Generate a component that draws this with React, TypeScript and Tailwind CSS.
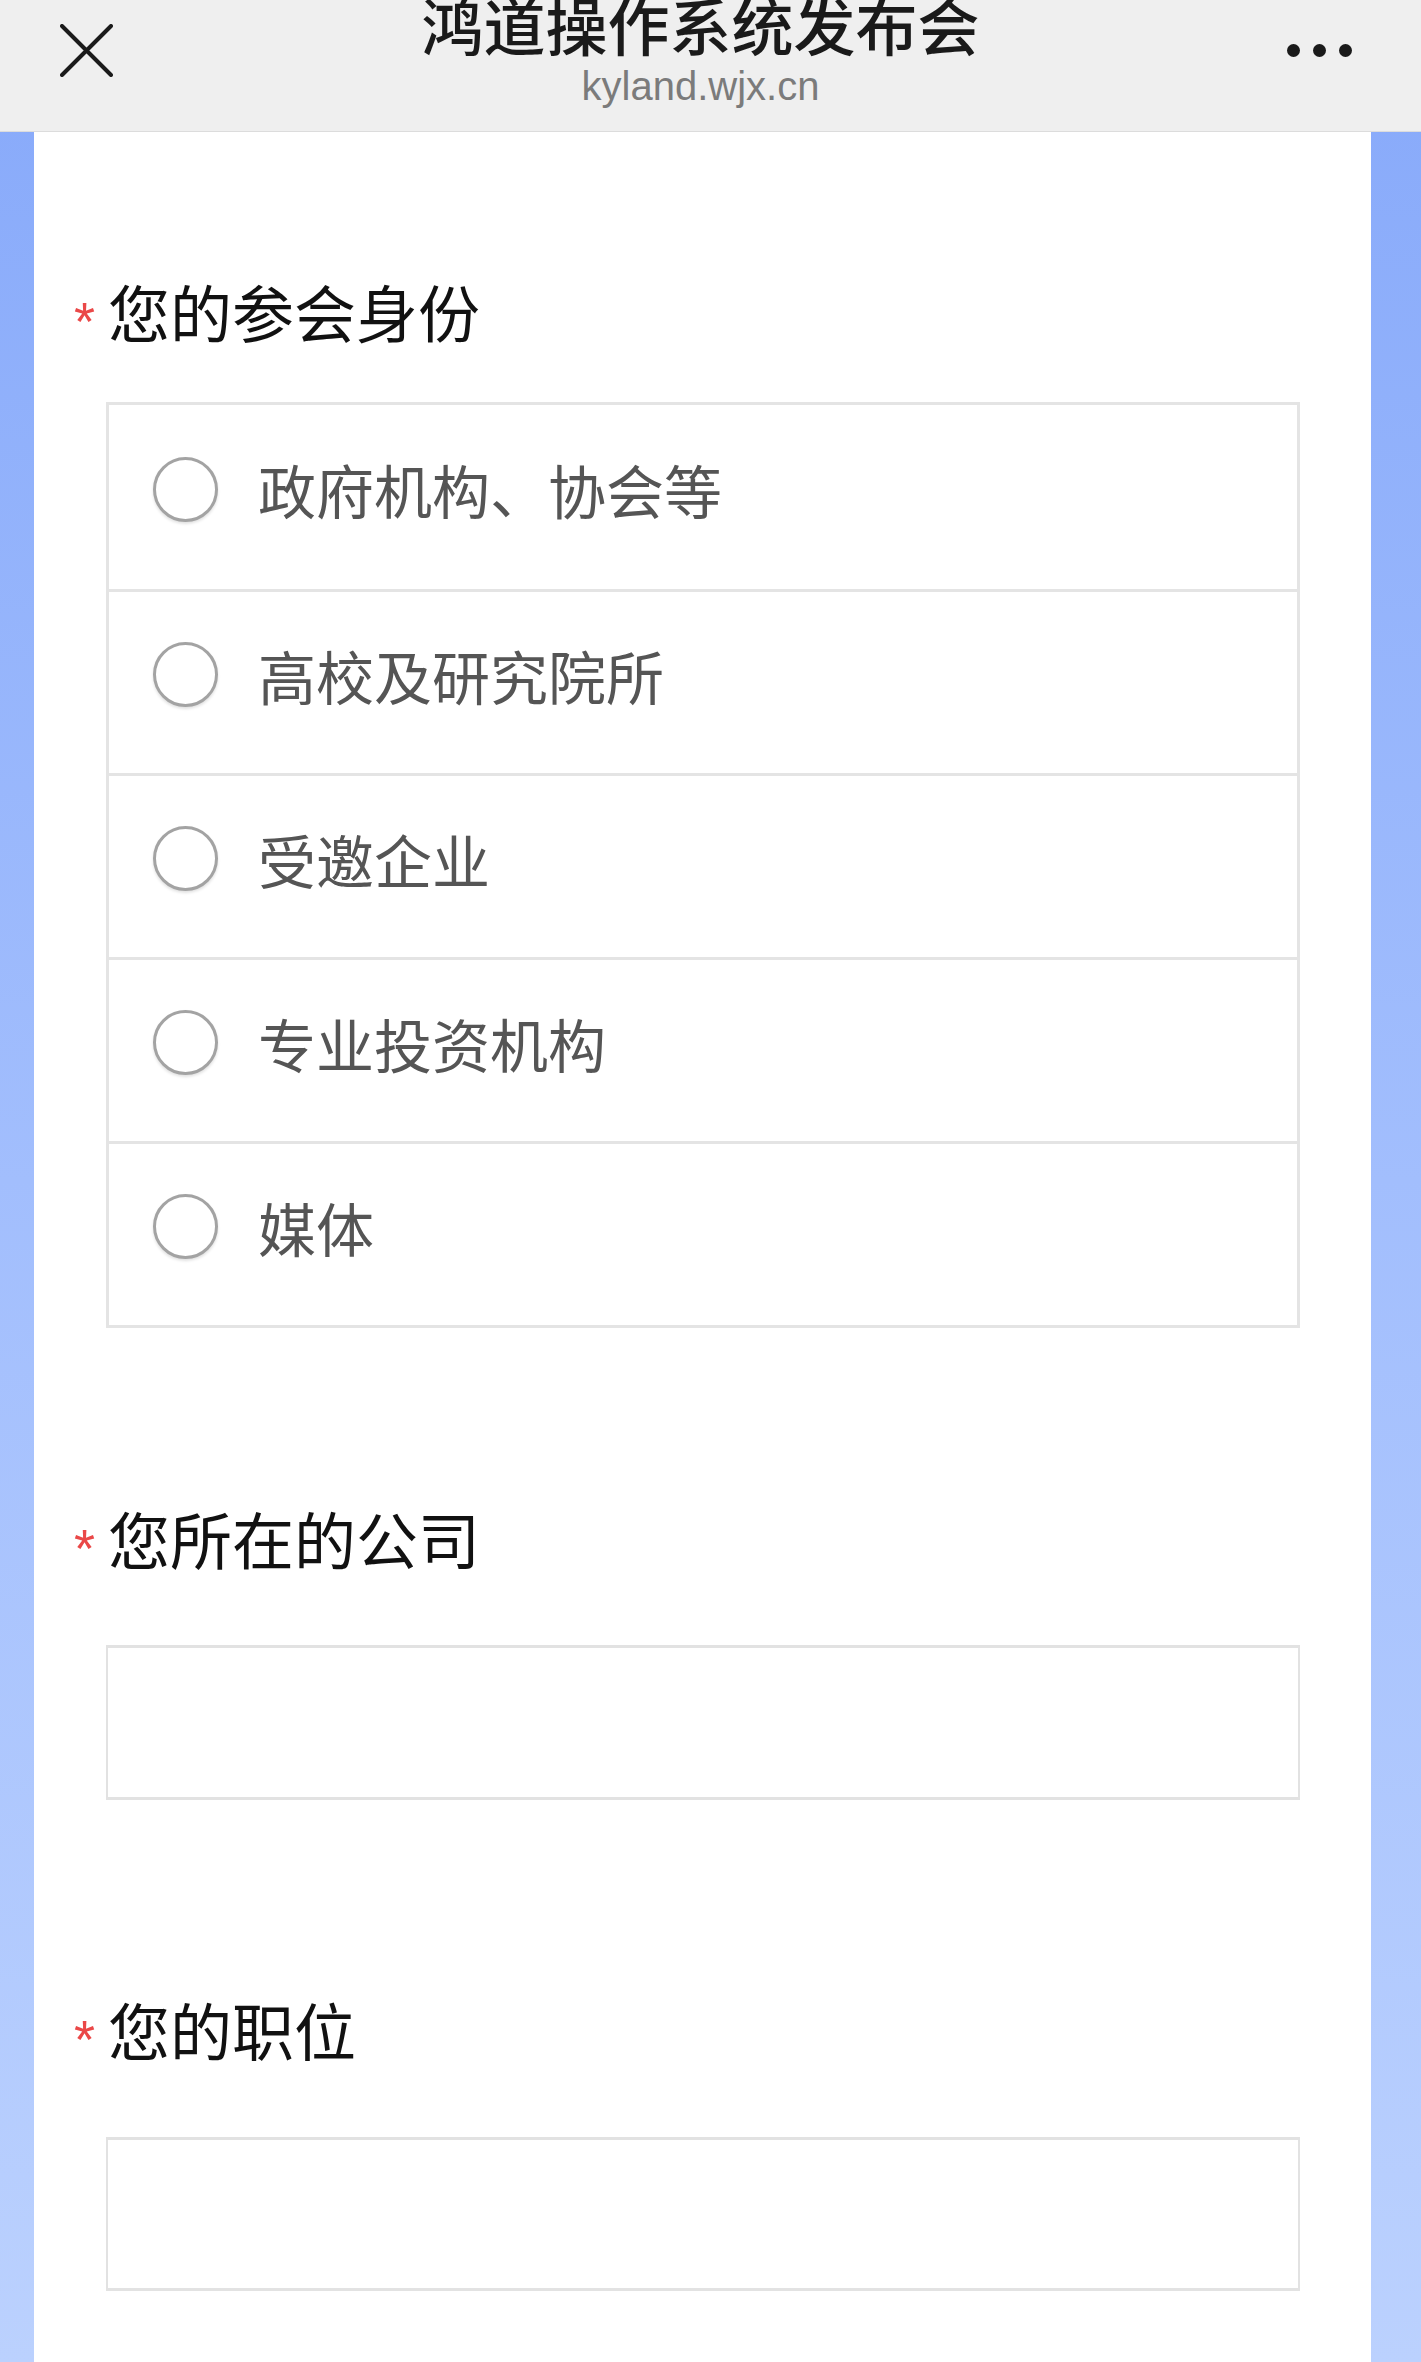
import React from "react";

const options = ["政府机构、协会等", "高校及研究院所", "受邀企业", "专业投资机构", "媒体"];

function Label({ text }: { text: string }) {
  return (
    <div className="flex items-center h-[62px] pl-[40px]">
      <span className="w-[34px] text-[54px] leading-none text-[#ea4848] font-['Liberation_Sans',sans-serif] mt-[20px]">*</span>
      <span className="text-[62px] leading-[62px] text-[#111111]">{text}</span>
    </div>
  );
}

function Radio() {
  return (
    <div className="w-[65px] h-[65px] rounded-full border-[3px] border-[#a3a3a3] bg-white shadow-[0_2px_3px_rgba(0,0,0,0.12)] shrink-0" />
  );
}

export default function App() {
  return (
    <div className="w-[1421px] h-[2362px] overflow-hidden bg-gradient-to-b from-[#87a9fa] via-[#a2befd] to-[#bbd1fe] font-['Noto_Sans_CJK_SC','Noto_Sans',sans-serif] flex flex-col">
      {/* Header */}
      <header className="h-[132px] shrink-0 bg-[#efefef] border-b border-[#dcdcdc] flex overflow-hidden">
        <div className="w-[170px] flex items-start pl-[60px] pt-[24px]">
          <svg width="53" height="53" viewBox="0 0 53 53" fill="none">
            <path d="M2 2 L51 51 M51 2 L2 51" stroke="#1a1a1a" strokeWidth="4" strokeLinecap="round" />
          </svg>
        </div>
        <div className="flex-1 flex flex-col items-center">
          <div className="mt-[-7px] text-[62px] leading-[62px] font-medium text-[#1a1a1a] whitespace-nowrap">鸿道操作系统发布会</div>
          <div className="mt-[11px] text-[40px] leading-[40px] text-[#7b7b7b] font-['Liberation_Sans',sans-serif]">kyland.wjx.cn</div>
        </div>
        <div className="w-[190px] flex items-start justify-end pr-[69px] pt-[44px] gap-[13px]">
          <span className="w-[13px] h-[13px] rounded-full bg-[#1a1a1a]" />
          <span className="w-[13px] h-[13px] rounded-full bg-[#1a1a1a]" />
          <span className="w-[13px] h-[13px] rounded-full bg-[#1a1a1a]" />
        </div>
      </header>

      {/* Card */}
      <div className="flex-1 ml-[34px] w-[1337px] bg-white pt-[148px]">
        <Label text="您的参会身份" />
        <div className="mt-[60px] ml-[72px] w-[1194px] border-[3px] border-[#e4e4e4] flex flex-col">
          {options.map((o, i) => (
            <div
              key={o}
              className={`h-[184px] flex items-center pl-[44px] pb-[16px] ${i > 0 ? "border-t-[3px] border-[#e4e4e4]" : ""}`}
            >
              <Radio />
              <span className="ml-[40px] text-[58px] leading-[58px] text-[#555555] whitespace-nowrap">{o}</span>
            </div>
          ))}
        </div>

        <div className="mt-[179px]">
          <Label text="您所在的公司" />
        </div>
        <div className="mt-[76px] ml-[72px] w-[1194px] h-[155px] border-x-2 border-y-[3px] border-[#e2e2e2]" />

        <div className="mt-[198px]">
          <Label text="您的职位" />
        </div>
        <div className="mt-[77px] ml-[72px] w-[1194px] h-[154px] border-x-2 border-y-[3px] border-[#e2e2e2]" />
      </div>
    </div>
  );
}
